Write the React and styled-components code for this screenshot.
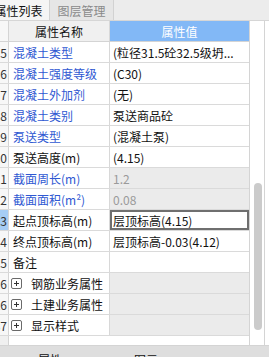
import React from 'react';
import styled, { createGlobalStyle } from 'styled-components';

const GlobalStyle = createGlobalStyle`
  html, body {
    margin: 0;
    padding: 0;
    background: #fff;
  }
  body {
    font-family: "Noto Sans CJK SC", "Noto Sans", sans-serif;
    font-size: 12px;
    overflow: hidden;
  }
`;

const Frame = styled.div`
  width: 269px;
  height: 357px;
  display: flex;
  flex-direction: column;
  overflow: hidden;
`;

const TabBar = styled.div`
  height: 20px;
  display: flex;
  background: #ececec;
  border-bottom: 1px solid #d6d6d6;
  flex-shrink: 0;
`;

const Tab = styled.div`
  display: flex;
  align-items: center;
  justify-content: center;
  height: 20px;
  box-sizing: border-box;
  font-size: 12px;
  border-right: 1px solid #d2d2d2;
  background: ${(p) => (p.$active ? '#f5f5f5' : '#e6e6e6')};
  color: ${(p) => (p.$active ? '#111' : '#8a8a8a')};
  width: ${(p) => p.$width}px;
  margin-left: ${(p) => p.$offset || 0}px;
  white-space: nowrap;
  flex-shrink: 0;
`;

const Body = styled.div`
  height: 324px;
  display: flex;
  border-bottom: 1px solid #d4d4d4;
  flex-shrink: 0;
`;

const Grid = styled.div`
  width: 250px;
  display: flex;
  flex-direction: column;
  border-right: 1px solid #d4d4d4;
  box-sizing: border-box;
`;

const Row = styled.div`
  display: flex;
  height: 21px;
  box-sizing: border-box;
  border-bottom: 1px solid #dadada;
  flex-shrink: 0;
`;

const NumCell = styled.div`
  width: 9px;
  box-sizing: border-box;
  border-right: 1px solid #d4d4d4;
  display: flex;
  align-items: center;
  justify-content: flex-end;
  overflow: hidden;
  font-size: 12px;
  color: #333;
  background: ${(p) => (p.$active ? '#a6cdf5' : '#f7f7f7')};
  padding-right: 1px;
`;

const NameCell = styled.div`
  width: 101px;
  box-sizing: border-box;
  border-right: 1px solid #d8d8d8;
  display: flex;
  align-items: center;
  gap: 9px;
  padding-left: ${(p) => (p.$group ? 2 : 4)}px;
  font-size: 12px;
  white-space: nowrap;
  overflow: hidden;
  color: ${(p) => (p.$blue ? '#2f58d2' : '#111')};
`;

const ValueCell = styled.div`
  flex: 1;
  display: flex;
  align-items: center;
  padding-left: 3px;
  font-size: 12px;
  white-space: nowrap;
  overflow: hidden;
  color: ${(p) => (p.$muted ? '#9a9a9a' : '#111')};
  background: ${(p) => (p.$gray ? '#ebebeb' : '#fff')};
  box-shadow: ${(p) => (p.$editing ? 'inset 0 0 0 2px #6f6f6f' : 'none')};
`;

const HeaderRow = styled(Row)`
  background: #f0f0f0;
  border-bottom-color: #d4d4d4;
`;

const HeaderName = styled(NameCell)`
  justify-content: center;
  padding-left: 0;
  background: #f0f0f0;
`;

const HeaderValue = styled(ValueCell)`
  justify-content: center;
  padding-left: 0;
  background: #82b8f6;
  color: #fff;
`;

const Filler = styled.div`
  flex: 1;
  display: flex;
`;

const FillerNum = styled.div`
  width: 9px;
  box-sizing: border-box;
  border-right: 1px solid #d4d4d4;
  background: #f0f0f0;
`;

const PlusBox = styled.span`
  width: 9px;
  height: 9px;
  border: 1px solid #6a6a6a;
  border-radius: 2px;
  position: relative;
  flex-shrink: 0;

  &::before,
  &::after {
    content: '';
    position: absolute;
    background: #333;
  }
  &::before {
    left: 2px;
    top: 4px;
    width: 5px;
    height: 1px;
  }
  &::after {
    left: 4px;
    top: 2px;
    width: 1px;
    height: 5px;
  }
`;

const ScrollTrack = styled.div`
  width: 15px;
  border-right: 1px solid #d4d4d4;
  display: flex;
  flex-direction: column;
  align-items: center;
  padding-left: 1px;
  box-sizing: border-box;
`;

const Thumb = styled.div`
  width: 8px;
  height: 147px;
  margin-top: 162px;
  border-radius: 4px;
  background: #cbcbcb;
`;

const BottomBar = styled.div`
  flex: 1;
  background: #dedede;
  display: flex;
  padding-top: 6px;
  padding-left: 38px;
  gap: 72px;
  font-size: 12px;
  line-height: 16px;
  color: #111;
`;

const rows = [
  { n: '5', name: '混凝土类型', value: '(粒径31.5砼32.5级坍...', blue: true },
  { n: '6', name: '混凝土强度等级', value: '(C30)', blue: true },
  { n: '7', name: '混凝土外加剂', value: '(无)', blue: true },
  { n: '8', name: '混凝土类别', value: '泵送商品砼', blue: true },
  { n: '9', name: '泵送类型', value: '(混凝土泵)', blue: true },
  { n: '10', name: '泵送高度(m)', value: '(4.15)' },
  { n: '11', name: '截面周长(m)', value: '1.2', blue: true, readonly: true },
  { n: '12', name: '截面面积(m²)', value: '0.08', blue: true, readonly: true },
  { n: '13', name: '起点顶标高(m)', value: '层顶标高(4.15)', active: true },
  { n: '14', name: '终点顶标高(m)', value: '层顶标高-0.03(4.12)' },
  { n: '15', name: '备注', value: '' },
  { n: '16', name: '钢筋业务属性', group: true },
  { n: '26', name: '土建业务属性', group: true },
  { n: '37', name: '显示样式', group: true },
];

export default function App() {
  return (
    <Frame>
      <GlobalStyle />
      <TabBar>
        <Tab $active $width={62} $offset={-12}>属性列表</Tab>
        <Tab $width={64}>图层管理</Tab>
      </TabBar>
      <Body>
        <Grid>
          <HeaderRow>
            <NumCell />
            <HeaderName>属性名称</HeaderName>
            <HeaderValue>属性值</HeaderValue>
          </HeaderRow>
          {rows.map((r) => (
            <Row key={r.n}>
              <NumCell $active={r.active}>{r.n}</NumCell>
              <NameCell $blue={r.blue} $group={r.group}>
                {r.group && <PlusBox />}
                {r.name}
              </NameCell>
              <ValueCell $gray={r.readonly || r.group} $muted={r.readonly} $editing={r.active}>
                {r.value}
              </ValueCell>
            </Row>
          ))}
          <Filler>
            <FillerNum />
          </Filler>
        </Grid>
        <ScrollTrack>
          <Thumb />
        </ScrollTrack>
      </Body>
      <BottomBar>
        <span>属性</span>
        <span>图元</span>
      </BottomBar>
    </Frame>
  );
}
